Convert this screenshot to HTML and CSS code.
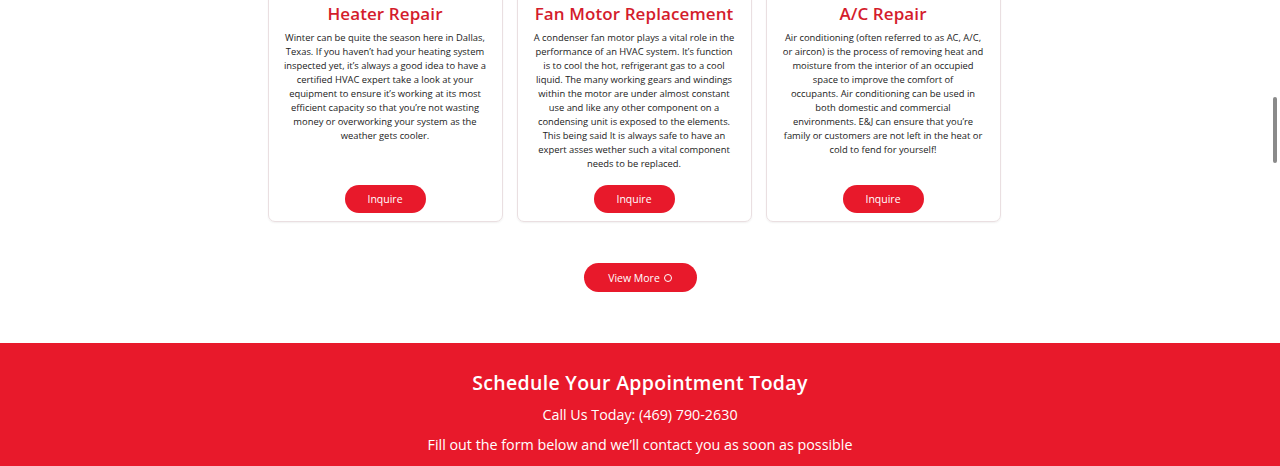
FILE: index.html
```html
<!DOCTYPE html>
<html lang="en">
<head>
<meta charset="utf-8">
<title>Services</title>
<link rel="stylesheet" href="styles.css">
</head>
<body>
<section class="services">
  <div class="cards">
    <article class="card">
      <h3 class="card-title">Heater Repair</h3>
      <p class="card-text">Winter can be quite the season here in Dallas, Texas. If you haven’t had your heating system inspected yet, it’s always a good idea to have a certified HVAC expert take a look at your equipment to ensure it’s working at its most efficient capacity so that you’re not wasting money or overworking your system as the weather gets cooler.</p>
      <a class="btn btn-inquire" href="#">Inquire</a>
    </article>
    <article class="card">
      <h3 class="card-title">Fan Motor Replacement</h3>
      <p class="card-text">A condenser fan motor plays a vital role in the performance of an HVAC system. It’s function is to cool the hot, refrigerant gas to a cool liquid. The many working gears and windings within the motor are under almost constant use and like any other component on a condensing unit is exposed to the elements. This being said It is always safe to have an expert asses wether such a vital component needs to be replaced.</p>
      <a class="btn btn-inquire" href="#">Inquire</a>
    </article>
    <article class="card">
      <h3 class="card-title">A/C Repair</h3>
      <p class="card-text card-text-lines">Air conditioning (often referred to as AC, A/C,<br>or aircon) is the process of removing heat and<br>moisture from the interior of an occupied<br>space to improve the comfort of<br>occupants. Air conditioning can be used in<br>both domestic and commercial<br>environments. E&amp;J can ensure that you’re<br>family or customers are not left in the heat or<br>cold to fend for yourself!</p>
      <a class="btn btn-inquire" href="#">Inquire</a>
    </article>
  </div>
  <div class="more-row">
    <a class="btn btn-more" href="#">View More <span class="ring"></span></a>
  </div>
</section>
<section class="schedule">
  <h2 class="schedule-title">Schedule Your Appointment Today</h2>
  <p class="schedule-line">Call Us Today: (469) 790-2630</p>
  <p class="schedule-line">Fill out the form below and we’ll contact you as soon as possible</p>
</section>
<div class="scroll-thumb"></div>
</body>
</html>
```
FILE: styles.css
```css
html, body {
  margin: 0;
  padding: 0;
  background: #ffffff;
  overflow: hidden;
}
body {
  font-family: "Open Sans", "DejaVu Sans", sans-serif;
  color: #222;
  height: 466px;
}
.services {
  padding-bottom: 51px;
}
.cards {
  display: flex;
  gap: 14px;
  width: 733px;
  margin: -10px auto 0;
  padding-right: 12px;
  box-sizing: content-box;
}
.card {
  flex: 0 0 235px;
  box-sizing: border-box;
  display: flex;
  flex-direction: column;
  align-items: center;
  border: 1px solid #eadfe1;
  border-radius: 7px;
  padding: 11px 14px 8px;
  box-shadow: 0 1px 2px rgba(0,0,0,0.06);
}
.card-title {
  margin: 0;
  font-size: 17px;
  line-height: 24px;
  font-weight: 600;
  color: #d41c2c;
  text-align: center;
  letter-spacing: 0.1px;
  white-space: nowrap;
}
.card-text {
  margin: 5px 0 14px;
  font-size: 9.4px;
  line-height: 14px;
  text-align: center;
  color: #222;
}
.card-text-lines {
  white-space: nowrap;
  margin-left: -6px;
  margin-right: -6px;
}
.btn {
  display: inline-flex;
  align-items: center;
  justify-content: center;
  background: #e8192b;
  color: #fff;
  text-decoration: none;
  border-radius: 15px;
}
.btn-inquire {
  margin-top: auto;
  width: 81px;
  height: 28px;
  font-size: 10.5px;
  font-weight: 500;
}
.more-row {
  display: flex;
  justify-content: center;
  margin-top: 41px;
}
.btn-more {
  width: 113px;
  height: 29px;
  font-size: 10.5px;
  gap: 4px;
}
.ring {
  display: inline-block;
  width: 6px;
  height: 6px;
  border: 1.8px solid #fff;
  border-radius: 50%;
}
.schedule {
  background: #e8192b;
  color: #fff;
  text-align: center;
  padding-top: 28px;
  height: 200px;
}
.schedule-title {
  margin: 0;
  font-size: 19.5px;
  line-height: 24px;
  font-weight: 600;
  letter-spacing: 0.3px;
}
.schedule-line {
  margin: 10px 0 0;
  font-size: 14.3px;
  line-height: 20px;
}
.scroll-thumb {
  position: fixed;
  right: 3px;
  top: 97px;
  width: 4px;
  height: 66px;
  border-radius: 2px;
  background: #8a8a8a;
}
```
